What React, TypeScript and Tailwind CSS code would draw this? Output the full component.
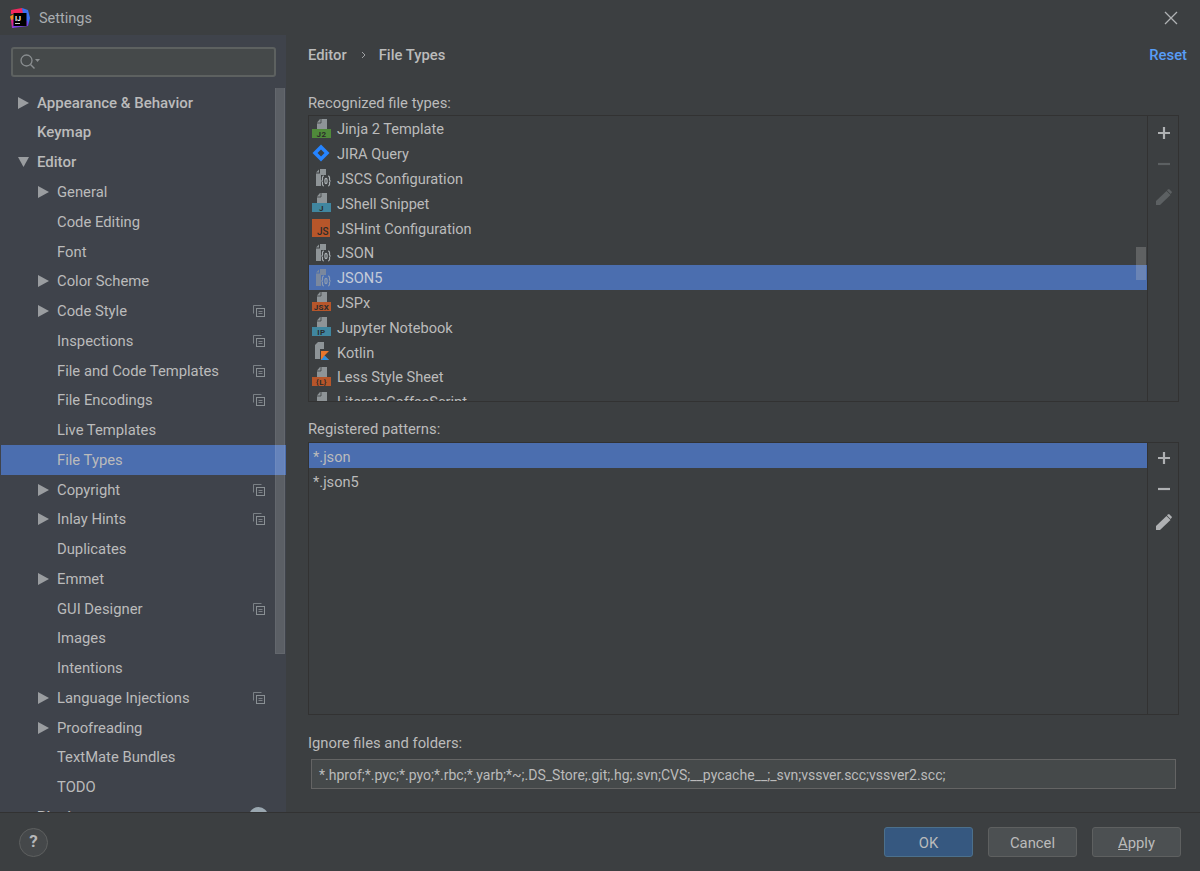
import React from "react";

const font = { fontFamily: '"Roboto","Liberation Sans",sans-serif' };

function FileIcon({ kind }: { kind: string }) {
  const badge: Record<string, [string, string]> = {
    j2: ["#4f8a3a", "J2"],
    jshell: ["#40869f", "J"],
    jsx: ["#b7562a", "JSX"],
    ip: ["#40869f", "IP"],
    less: ["#b7562a", "{L}"],
  };
  if (kind === "jira")
    return (
      <svg width="18" height="18" viewBox="0 0 18 18">
        <path d="M9 .5L17.500 9 9 17.500.5 9z" fill="#2684ff" />
        <path d="M9 5.500L12.500 9 9 12.500 5.500 9z" fill="#3c3f41" />
      </svg>
    );
  if (kind === "jshint")
    return (
      <svg width="18" height="18" viewBox="0 0 18 18">
        <rect width="18" height="18" fill="#b7562a" />
        <text x="16.500" y="15.500" textAnchor="end" fontSize="10" fontWeight="500" fill="#2b2b2b" fontFamily="Roboto">JS</text>
      </svg>
    );
  if (kind === "cfg")
    return (
      <svg width="20" height="19" viewBox="0 0 20 19">
        <path d="M8 1h6v6H9v11H4V5.500h4z" fill="#8e9497" />
        <path d="M7 1.500v3H4z" fill="#8e9497" />
        <g fill="none" stroke="#a9afb2" strokeWidth="1.200">
          <path d="M12 8c-2 0-1.500 2.500-1.500 3.500S10 13 9.300 13c.7 0 1.200.5 1.200 1.500S10 18 12 18" />
          <path d="M16 8c2 0 1.500 2.500 1.500 3.500S18 13 18.700 13c-.7 0-1.200.5-1.200 1.500S18 18 16 18" />
          <ellipse cx="14" cy="13" rx="1.100" ry="2.600" />
        </g>
      </svg>
    );
  if (kind === "kotlin")
    return (
      <svg width="18" height="19" viewBox="0 0 18 19">
        <path d="M6 0h6v7H3V3z" fill="#8e9497" />
        <path d="M3 7h5v10H3z" fill="#8e9497" />
        <path d="M9 9h8l-4.500 4.500L17 18H9z" fill="#e8762d" />
        <path d="M9 18l3.500-4.500L17 18z" fill="#2a8fe0" />
      </svg>
    );
  const b = badge[kind];
  return (
    <svg width="20" height="19" viewBox="0 0 20 19">
      <path d="M8 0h7v10H5V3.500z" fill="#8e9497" />
      <path d="M5 4h4V0" fill="none" stroke="#3c3f41" strokeWidth=".8" />
      <rect x="0" y="10" width="19" height="9" fill={b[0]} />
      <text x="9.500" y="17.500" textAnchor="middle" fontSize="8" fontWeight="700" fill="#2b2b2b" fontFamily="Roboto" letterSpacing=".4">{b[1]}</text>
    </svg>
  );
}

function Plus() {
  return (
    <svg width="14" height="14" viewBox="0 0 14 14">
      <path d="M7 1v12M1 7h12" stroke="#afb1b3" strokeWidth="2.200" />
    </svg>
  );
}
function Minus({ c }: { c: string }) {
  return (
    <svg width="14" height="14" viewBox="0 0 14 14">
      <path d="M1 7h12" stroke={c} strokeWidth="2.200" />
    </svg>
  );
}
function Pencil({ c }: { c: string }) {
  return (
    <svg width="18" height="18" viewBox="0 0 18 18">
      <path d="M1 17v-4L11.500 3l4 4L5 17z" fill={c} />
      <path d="M13 1.500l1-.5 3 3-.5 1-1 1-3.500-3.500z" fill={c} />
    </svg>
  );
}

function Tools({ dim, first }: { dim?: boolean; first?: boolean }) {
  const c = dim ? "#5c6062" : "#afb1b3";
  return (
    <div className={`flex w-[31px] shrink-0 flex-col items-center border-l border-[#323232] pl-px ${first ? "pt-[10px]" : "pt-[8px]"}`}>
      <div className="flex h-[14px] items-center"><Plus /></div>
      <div className="mt-[17px] flex h-[14px] items-center"><Minus c={c} /></div>
      <div className="mt-[17px] flex h-[18px] items-center"><Pencil c={c} /></div>
    </div>
  );
}

function Copy() {
  return (
    <svg width="12" height="12" viewBox="0 0 12 12" fill="none" stroke="#8a9094" strokeWidth="1">
      <path d="M.5 8.500v-8h8" opacity=".8" />
      <rect x="3.500" y="3.500" width="8" height="8" />
      <path d="M5.500 6.500h4M5.500 8.500h4" strokeWidth=".8" />
    </svg>
  );
}

function Arrow({ down }: { down?: boolean }) {
  return (
    <svg width="11" height="12" viewBox="0 0 11 12">
      <path d={down ? "M0 1h11L5.500 11z" : "M0 0l11 6L0 12z"} fill="#9a9da0" />
    </svg>
  );
}

type Nav = { t: string; lvl: 0 | 1; arrow?: "r" | "d"; copy?: boolean; sel?: boolean };
const nav: Nav[] = [
  { t: "Appearance & Behavior", lvl: 0, arrow: "r" },
  { t: "Keymap", lvl: 0 },
  { t: "Editor", lvl: 0, arrow: "d" },
  { t: "General", lvl: 1, arrow: "r" },
  { t: "Code Editing", lvl: 1 },
  { t: "Font", lvl: 1 },
  { t: "Color Scheme", lvl: 1, arrow: "r" },
  { t: "Code Style", lvl: 1, arrow: "r", copy: true },
  { t: "Inspections", lvl: 1, copy: true },
  { t: "File and Code Templates", lvl: 1, copy: true },
  { t: "File Encodings", lvl: 1, copy: true },
  { t: "Live Templates", lvl: 1 },
  { t: "File Types", lvl: 1, sel: true },
  { t: "Copyright", lvl: 1, arrow: "r", copy: true },
  { t: "Inlay Hints", lvl: 1, arrow: "r", copy: true },
  { t: "Duplicates", lvl: 1 },
  { t: "Emmet", lvl: 1, arrow: "r" },
  { t: "GUI Designer", lvl: 1, copy: true },
  { t: "Images", lvl: 1 },
  { t: "Intentions", lvl: 1 },
  { t: "Language Injections", lvl: 1, arrow: "r", copy: true },
  { t: "Proofreading", lvl: 1, arrow: "r" },
  { t: "TextMate Bundles", lvl: 1 },
  { t: "TODO", lvl: 1 },
];

const types: [string, string][] = [
  ["j2", "Jinja 2 Template"],
  ["jira", "JIRA Query"],
  ["cfg", "JSCS Configuration"],
  ["jshell", "JShell Snippet"],
  ["jshint", "JSHint Configuration"],
  ["cfg", "JSON"],
  ["cfg", "JSON5"],
  ["jsx", "JSPx"],
  ["ip", "Jupyter Notebook"],
  ["kotlin", "Kotlin"],
  ["less", "Less Style Sheet"],
  ["jsx", "LiterateCoffeeScript"],
];

function Logo() {
  return (
    <svg width="20" height="20" viewBox="0 0 20 20">
      <path d="M1 2l11-2 2 6H1z" fill="#f2275e" />
      <path d="M12 0l6 2 2 8-2 8-4-6z" fill="#3b6ff0" />
      <path d="M0 8.500L4 6v6l-3 0z" fill="#f58a1f" />
      <path d="M1 12l3-1v9H2z" fill="#e0268a" />
      <path d="M2 20l16-2v-5H4z" fill="#7b3fe4" />
      <rect x="3.500" y="5" width="13" height="13" fill="#000" />
      <text x="5" y="12.500" fontSize="7" fontWeight="700" fill="#fff" fontFamily="Roboto">IJ</text>
      <rect x="5" y="15" width="5" height="1" fill="#ccc" />
    </svg>
  );
}

export default function App() {
  return (
    <div style={font} className="flex h-[871px] w-[1200px] flex-col overflow-hidden bg-[#3c3f41] text-[14.800px] text-[#bbbbbb]">
      <div className="flex h-[35px] shrink-0 items-center bg-[#3c3f41] pl-[10px] pr-[22px]">
        <Logo />
        <span className="ml-[9px] pt-[2px] text-[14.500px] text-[#a9adb0]">Settings</span>
        <svg className="ml-auto" width="14" height="14" viewBox="0 0 14 14">
          <path d="M1 1l12 12M13 1L1 13" stroke="#b0b2b4" strokeWidth="1.300" />
        </svg>
      </div>

      <div className="flex min-h-0 flex-1">
        <aside className="relative flex w-[286px] shrink-0 flex-col overflow-hidden bg-[#3f434b] pl-px">
          <div className="mx-[10px] mt-[12px] flex h-[30px] shrink-0 items-center rounded-[3px] border-2 border-[#5d6160] bg-[#45494a] pl-[6px]">
            <svg width="22" height="18" viewBox="0 0 22 18" fill="none">
              <circle cx="7.500" cy="7.500" r="5.500" stroke="#8a8e90" strokeWidth="1.300" />
              <path d="M11.500 11.500l4 4" stroke="#8a8e90" strokeWidth="1.500" />
              <path d="M16 6h5l-2.500 3z" fill="#8a8e90" />
            </svg>
          </div>
          <div className="mt-[11px] flex flex-col">
            {nav.map((n) => (
              <div
                key={n.t}
                className={`flex h-[29.750px] shrink-0 items-center pr-[21px] ${n.sel ? "bg-[#4b6eaf]" : ""}`}
              >
                <div className={`flex w-[36px] justify-end pr-[8px] ${n.lvl === 1 ? "ml-[20px]" : ""}`}>
                  {n.arrow && <Arrow down={n.arrow === "d"} />}
                </div>
                <span className={`whitespace-nowrap ${n.lvl === 0 ? "text-[15px] font-medium" : ""}`}>{n.t}</span>
                {n.copy && <span className="ml-auto flex"><Copy /></span>}
              </div>
            ))}
            <div className="flex h-[29.750px] shrink-0 items-center pr-[18px]">
              <div className="w-[36px]" />
              <span className="text-[15px] font-medium">Plugins</span>
              <span className="ml-auto h-[19px] w-[19px] rounded-full bg-[#9aa7b0]" />
            </div>
          </div>
          <div className="absolute right-px top-[53px] h-[566px] w-[10px] border-x border-b border-white/5 bg-white/15" />
        </aside>

        <main className="flex min-w-0 flex-1 flex-col pl-[22px] pr-[21px]">
          <div className="mt-[10px] flex h-[20px] shrink-0 items-center font-medium">
            <span>Editor</span>
            <svg className="ml-[14px] mr-[13px]" width="5" height="8" viewBox="0 0 5 8" fill="none">
              <path d="M1 1l3 3-3 3" stroke="#a0a2a4" strokeWidth="1" />
            </svg>
            <span>File Types</span>
            <span className="-mr-[8px] ml-auto text-[#589df6]">Reset</span>
          </div>

          <div className="mt-[28px] h-[21px] shrink-0 leading-[21px]">Recognized file types:</div>
          <div className="mt-[1px] flex h-[287px] shrink-0 border border-[#323232]">
            <div className="relative min-w-0 flex-1 overflow-hidden text-[14.600px]">
              {types.map(([k, t]) => (
                <div key={t} className={`flex h-[24.800px] items-center pl-[3px] ${t === "JSON5" ? "bg-[#4b6eaf]" : ""}`}>
                  <span className={`flex w-[25px] shrink-0 ${t === "JSON5" ? "opacity-70" : ""}`}><FileIcon kind={k} /></span>
                  <span className={`pt-[4px] ${t === "JSON5" ? "text-[#c4cbd8]" : ""}`}>{t}</span>
                </div>
              ))}
              <div className="absolute right-px top-[131px] h-[33px] w-[10px] bg-[#c8c8c8]/25" />
            </div>
            <Tools dim first />
          </div>

          <div className="mt-[17px] h-[21px] shrink-0 leading-[21px]">Registered patterns:</div>
          <div className="mt-[2px] flex h-[273px] shrink-0 border border-[#323232]">
            <div className="min-w-0 flex-1 text-[14.600px]">
              <div className="flex h-[25px] items-center bg-[#4b6eaf] pl-[4px] pt-[4px]">*.json</div>
              <div className="flex h-[25px] items-center pl-[4px] pt-[4px]">*.json5</div>
            </div>
            <Tools />
          </div>

          <div className="mt-[18px] h-[21px] shrink-0 leading-[21px]">Ignore files and folders:</div>
          <div className="mx-[3px] mt-[5px] flex h-[30px] shrink-0 items-center border border-[#646464] bg-[#45494a] pl-[7px] pt-[3px] text-[14px]">
            *.hprof;*.pyc;*.pyo;*.rbc;*.yarb;*~;.DS_Store;.git;.hg;.svn;CVS;__pycache__;_svn;vssver.scc;vssver2.scc;
          </div>
        </main>
      </div>

      <footer className="flex h-[59px] shrink-0 items-center border-t border-[#323232] bg-[#3c3f41] px-[19px]">
        <div className="flex h-[29px] w-[29px] items-center justify-center rounded-full border border-[#5e6060] bg-[#45484a] text-[17px] font-bold text-[#b5b7b9]">?</div>
        <button className="ml-auto h-[30px] w-[89px] rounded-[3px] border border-[#4c708c] bg-[#365880] pt-[2px] text-[#bbbbbb]">OK</button>
        <button className="ml-[15px] h-[30px] w-[89px] rounded-[3px] border border-[#5e6060] bg-[#4c5052] pt-[2px] text-[#bbbbbb]">Cancel</button>
        <button className="ml-[15px] h-[30px] w-[89px] rounded-[3px] border border-[#5e6060] bg-[#4c5052] pt-[2px] text-[#bbbbbb]"><span className="underline">A</span>pply</button>
      </footer>
    </div>
  );
}
